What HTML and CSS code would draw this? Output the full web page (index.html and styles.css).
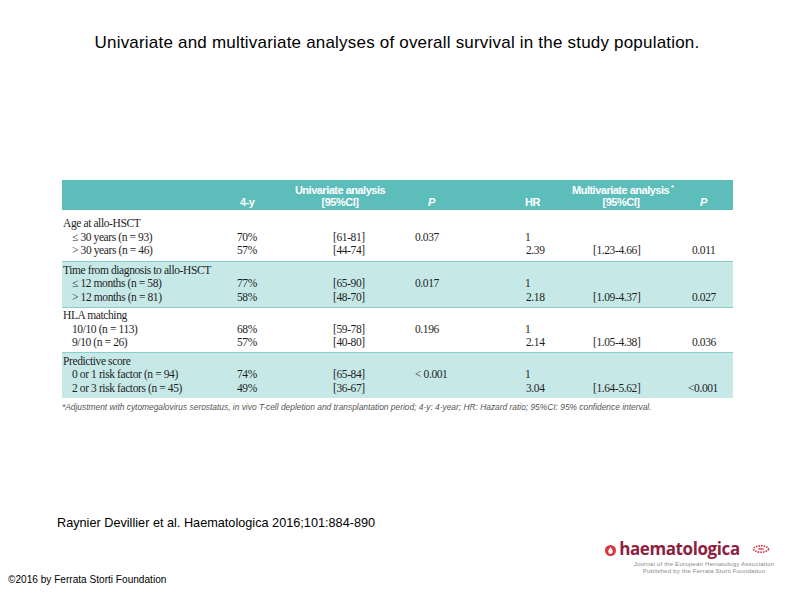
FILE: index.html
```html
<!DOCTYPE html>
<html lang="en">
<head>
<meta charset="utf-8">
<title>Univariate and multivariate analyses</title>
<link rel="stylesheet" href="styles.css">
</head>
<body>
<div class="slide">
  <h1 class="title">Univariate and multivariate analyses of overall survival in the study population.</h1>

  <div class="figure">
    <div class="thead">
      <div class="th th-empty"></div>
      <div class="th th-low">4-y</div>
      <div class="th th-center">Univariate analysis<br>[95%CI]</div>
      <div class="th th-low th-center th-p">P</div>
      <div class="th th-low th-hr">HR</div>
      <div class="th th-center">Multivariate analysis<sup>*</sup><br>[95%CI]</div>
      <div class="th th-low th-p th-p2">P</div>
    </div>

    <div class="group first">
      <div class="row"><span class="label">Age at allo-HSCT</span></div>
      <div class="row">
        <span class="label sub">≤ 30 years (n = 93)</span><span>70%</span><span>[61-81]</span><span>0.037</span><span>1</span><span></span><span></span>
      </div>
      <div class="row">
        <span class="label sub">&gt; 30 years (n = 46)</span><span>57%</span><span>[44-74]</span><span></span><span class="hr2">2.39</span><span>[1.23-4.66]</span><span>0.011</span>
      </div>
    </div>

    <div class="group shade">
      <div class="row"><span class="label">Time from diagnosis to allo-HSCT</span></div>
      <div class="row">
        <span class="label sub">≤ 12 months (n = 58)</span><span>77%</span><span>[65-90]</span><span>0.017</span><span>1</span><span></span><span></span>
      </div>
      <div class="row">
        <span class="label sub">&gt; 12 months (n = 81)</span><span>58%</span><span>[48-70]</span><span></span><span class="hr2">2.18</span><span>[1.09-4.37]</span><span>0.027</span>
      </div>
    </div>

    <div class="group">
      <div class="row"><span class="label">HLA matching</span></div>
      <div class="row">
        <span class="label sub">10/10 (n = 113)</span><span>68%</span><span>[59-78]</span><span>0.196</span><span>1</span><span></span><span></span>
      </div>
      <div class="row">
        <span class="label sub">9/10 (n = 26)</span><span>57%</span><span>[40-80]</span><span></span><span class="hr2">2.14</span><span>[1.05-4.38]</span><span>0.036</span>
      </div>
    </div>

    <div class="group shade">
      <div class="row"><span class="label">Predictive score</span></div>
      <div class="row">
        <span class="label sub">0 or 1 risk factor (n = 94)</span><span>74%</span><span>[65-84]</span><span>&lt; 0.001</span><span>1</span><span></span><span></span>
      </div>
      <div class="row">
        <span class="label sub">2 or 3 risk factors (n = 45)</span><span>49%</span><span>[36-67]</span><span></span><span class="hr2">3.04</span><span>[1.64-5.62]</span><span class="pl">&lt;0.001</span>
      </div>
    </div>

    <p class="footnote">*Adjustment with cytomegalovirus serostatus, in vivo T-cell depletion and transplantation period; 4-y: 4-year; HR: Hazard ratio; 95%CI: 95% confidence interval.</p>
  </div>

  <p class="citation">Raynier Devillier et al. Haematologica 2016;101:884-890</p>

  <div class="bottom">
    <span class="copyright">©2016 by Ferrata Storti Foundation</span>
    <div class="logo">
      <div class="logo-top">
        <svg class="logo-mark" width="13" height="13" viewBox="0 0 13 13">
          <circle cx="6.5" cy="6.5" r="5.5" fill="#d9343f"/>
          <path d="M6.5 3 C5 5.2 4.2 6.4 4.2 7.6 a2.3 2.3 0 0 0 4.6 0 C8.8 6.4 8 5.2 6.5 3z" fill="#fff"/>
        </svg>
        <span class="wordmark">haematologica</span>
        <svg class="logo-cell" width="18" height="10" viewBox="0 0 18 10">
          <ellipse cx="9" cy="5" rx="7.5" ry="3.2" fill="none" stroke="#d63a4a" stroke-width="1.6" stroke-dasharray="1.6 1"/>
          <ellipse cx="9" cy="5" rx="3" ry="1.3" fill="#e77a86"/>
        </svg>
      </div>
      <div class="logo-subs">
        <div class="logo-sub">Journal of the European Hematology Association</div>
        <div class="logo-sub">Published by the Ferrata Storti Foundation</div>
      </div>
    </div>
  </div>
</div>
</body>
</html>
```

FILE: styles.css
```css
html, body {
  margin: 0;
  padding: 0;
  background: #ffffff;
}

.slide {
  width: 794px;
  height: 595px;
  display: flex;
  flex-direction: column;
  font-family: "Liberation Sans", Arial, sans-serif;
  color: #000;
  overflow: hidden;
}

.title {
  margin: 34px 0 0;
  font-size: 17px;
  letter-spacing: 0.2px;
  line-height: 18px;
  font-weight: normal;
  text-align: center;
}

.figure {
  margin: 128px 0 0 62px;
  width: 671px;
}

/* header bar */
.thead {
  display: grid;
  grid-template-columns: 178px 47px 106px 77px 102px 98px 63px;
  background: #5dbdba;
  height: 30px;
  box-sizing: border-box;
  padding-top: 4px;
  color: #ffffff;
  font-family: "Liberation Sans Narrow", "Liberation Sans", Arial, sans-serif;
  font-weight: bold;
  font-size: 11px;
  letter-spacing: -0.5px;
  line-height: 12px;
}

.th {
  white-space: nowrap;
}

.th-low {
  padding-top: 12px;
}

.th-center {
  text-align: center;
}

.th-p {
  font-style: italic;
}

.th-hr {
  padding-left: 55px;
}

.th-p2 {
  padding-left: 30px;
}

.thead sup {
  font-size: 8px;
  line-height: 0;
  vertical-align: 4px;
  margin-left: 2px;
}

/* body groups */
.group {
  padding: 1.5px 0 2.5px;
  font-family: "Liberation Serif", "Times New Roman", serif;
  font-size: 11.5px;
  letter-spacing: -0.4px;
  line-height: 13.5px;
  color: #1e1e1e;
  border-top: 1px solid #86cfcc;
}

.group.first {
  border-top: none;
  padding: 7px 0 3.5px;
}

.group.shade {
  background: #c6e9e8;
}

.row {
  display: grid;
  grid-template-columns: 175px 96px 82px 110px 68px 99px 41px;
  white-space: nowrap;
}

.label {
  padding-left: 1px;
}

.label.sub {
  padding-left: 10px;
}

.hr2 {
  padding-left: 1px;
}

.pl {
  margin-left: -4px;
}

.footnote {
  margin: 4px 0 0;
  font-family: "Liberation Sans", Arial, sans-serif;
  font-style: italic;
  font-size: 8.4px;
  line-height: 11px;
  color: #555;
  white-space: nowrap;
}

.citation {
  margin: 102px 0 0 57px;
  font-size: 12.7px;
  line-height: 16px;
}

.bottom {
  margin-top: auto;
  display: flex;
  justify-content: space-between;
  align-items: flex-end;
  padding: 0 19px 9px 8px;
}

.copyright {
  font-size: 10.1px;
  line-height: 13px;
}

.logo {
  display: flex;
  flex-direction: column;
  align-items: center;
  width: 170px;
  margin-bottom: 12px;
}

.logo-top {
  display: flex;
  align-items: center;
  gap: 2px;
  margin-left: -6px;
  margin-bottom: 2px;
}

.logo-mark {
  margin-top: 3px;
}

.wordmark {
  font-family: "Open Sans", "Liberation Sans", sans-serif;
  font-weight: bold;
  font-size: 17px;
  line-height: 18px;
  letter-spacing: -0.4px;
  color: #8e1f3f;
  margin-right: 10px;
}

.logo-subs {
  padding-left: 28px;
  text-align: center;
}

.logo-sub {
  font-size: 6.2px;
  line-height: 7px;
  color: #8a8a8a;
  letter-spacing: 0.15px;
  white-space: nowrap;
}
```
